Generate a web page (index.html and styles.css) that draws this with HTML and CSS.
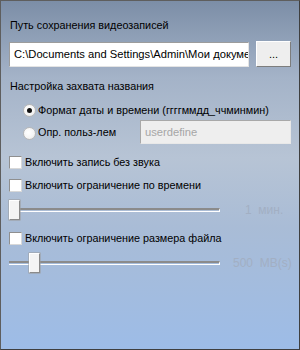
FILE: index.html
```html
<!DOCTYPE html>
<html lang="ru">

<head>
    <meta charset="UTF-8">
    <title>Настройки записи</title>
    <link rel="stylesheet" href="styles.css">
</head>

<body>
    <div class="panel">
        <div class="row caption">Путь сохранения видеозаписей</div>

        <div class="row path-row">
            <div class="path-input">C:\Documents and Settings\Admin\Мои докуме</div>
            <button class="browse">...</button>
        </div>

        <div class="row caption naming">Настройка захвата названия</div>

        <div class="row radio-row first">
            <span class="radio checked"></span>
            <span>Формат даты и времени (ггггммдд_ччминмин)</span>
        </div>

        <div class="row radio-row second">
            <span class="radio"></span>
            <span class="radio-label">Опр. польз-лем</span>
            <div class="user-input">userdefine</div>
        </div>

        <div class="row check-row mute">
            <span class="check"></span>
            <span>Включить запись без звука</span>
        </div>

        <div class="row check-row time">
            <span class="check"></span>
            <span>Включить ограничение по времени</span>
        </div>

        <div class="row slider-row">
            <div class="slider"><span class="thumb" style="margin-left: 0px;"></span></div>
            <span class="slider-value">1  мин.</span>
        </div>

        <div class="row check-row size">
            <span class="check"></span>
            <span>Включить ограничение размера файла</span>
        </div>

        <div class="row slider-row">
            <div class="slider"><span class="thumb" style="margin-left: 20px;"></span></div>
            <span class="slider-value wide">500  MB(s)</span>
        </div>
    </div>
</body>

</html>
```

FILE: styles.css
```css
html, body {
    margin: 0;
    padding: 0;
}

body {
    width: 300px;
    height: 350px;
    overflow: hidden;
    font-family: "Liberation Sans", Arial, sans-serif;
    font-size: 10.8px;
    color: #000;
}

.panel {
    width: 300px;
    height: 350px;
    box-sizing: border-box;
    border: 1px solid #5e5e5e;
    border-right-color: #3f3f3f;
    border-bottom-color: #3f3f3f;
    background: linear-gradient(to bottom, #7c8ea7 0%, #a4b3c8 22%, #b7c4d5 45%, #a9bcd6 65%, #9dbce7 100%);
    padding: 16px 0 0 8px;
    display: flex;
    flex-direction: column;
    white-space: nowrap;
}

.row {
    display: flex;
    align-items: center;
}

.caption {
    height: 16px;
    padding-left: 1px;
}

/* path */
.path-row {
    margin-top: 8px;
    height: 26px;
}

.path-input {
    width: 240px;
    height: 25px;
    box-sizing: border-box;
    background: #fff;
    border: 1px solid #9c9c9c;
    border-right-color: #e4e4e4;
    border-bottom-color: #e4e4e4;
    padding: 5px 0 0 4px;
    font-size: 11.2px;
    overflow: hidden;
}

.browse {
    margin-left: 7px;
    width: 35px;
    height: 26px;
    padding: 0;
    background: #eeeeee;
    border: 1px solid #fff;
    border-right-color: #7d7d7d;
    border-bottom-color: #7d7d7d;
    font-family: inherit;
    font-size: 11px;
    color: #000;
}

.naming {
    margin-top: 11px;
}

/* radios */
.radio-row {
    padding-left: 14px;
}

.radio-row.first {
    margin-top: 8px;
    height: 16px;
}

.radio-row.second {
    margin-top: 8px;
    height: 26px;
    align-items: flex-start;
}

.radio {
    width: 11px;
    height: 11px;
    border-radius: 50%;
    background: radial-gradient(circle at 40% 40%, #ffffff 0%, #f4f4f4 60%, #d6d6d6 100%);
    border: 1px solid #b8b8b8;
    margin-right: 2px;
    display: flex;
    align-items: center;
    justify-content: center;
    flex: none;
}

.radio.checked::after {
    content: "";
    width: 5px;
    height: 5px;
    border-radius: 50%;
    background: #111;
}

.radio-row.second .radio {
    margin-top: 1px;
}

.radio-label {
    width: 102px;
}

.user-input {
    width: 151px;
    height: 24px;
    box-sizing: border-box;
    margin-top: -6px;
    background: #eeeeee;
    border: 1px solid #a8a8a8;
    border-right-color: #e8e8e8;
    border-bottom-color: #e8e8e8;
    padding: 5px 0 0 4px;
    color: #a6a6a6;
    font-size: 11.2px;
}

/* checkboxes */
.check-row {
    height: 16px;
}

.check-row.mute {
    margin-top: 2px;
}

.check-row.time {
    margin-top: 7px;
}

.check-row.size {
    margin-top: 10px;
}

.check {
    width: 11px;
    height: 11px;
    background: #fff;
    border: 1px solid #8f8f8f;
    border-right-color: #d8d8d8;
    border-bottom-color: #d8d8d8;
    margin-right: 3px;
    flex: none;
}

/* sliders */
.slider-row {
    height: 20px;
    margin-top: 7px;
}

.slider {
    position: relative;
    width: 211px;
    height: 20px;
    display: flex;
    align-items: center;
}

.slider::before {
    content: "";
    position: absolute;
    left: 0;
    right: 0;
    top: 8px;
    height: 1px;
    border-top: 2px solid #8b8b8b;
    border-bottom: 1px solid #fff;
    border-right: 1px solid #fff;
}

.thumb {
    position: relative;
    width: 9px;
    height: 18px;
    background: #f4f4f4;
    border: 1px solid #fff;
    border-right-color: #8a8a8a;
    border-bottom-color: #8a8a8a;
    box-shadow: 0 0 0 0.5px #9a9a9a;
}

.slider-value {
    margin-left: 25px;
    color: #a2afc3;
    white-space: pre;
    font-size: 12px;
}

.slider-value.wide {
    margin-left: 13px;
}
```
